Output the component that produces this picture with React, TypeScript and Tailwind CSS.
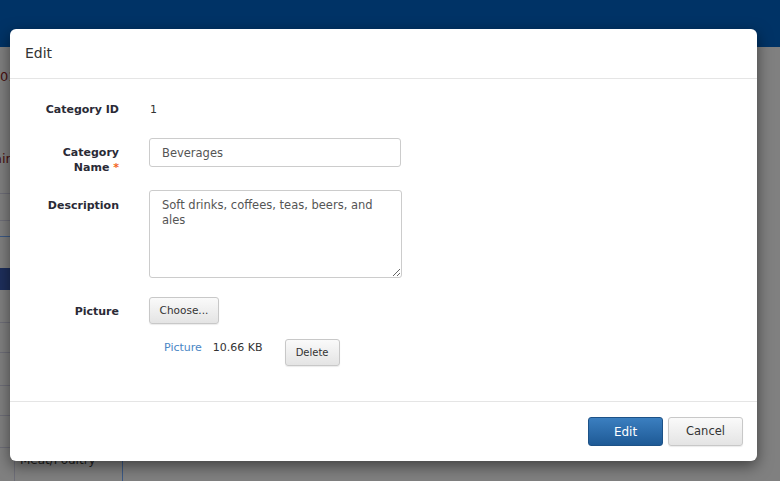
const font = { fontFamily: '"DejaVu Sans", Verdana, sans-serif' };

function BgTable() {
  const rows = [193, 220, 322, 352, 385, 415, 447];
  return (
    <div className="relative flex-1 bg-[#808080]">
      <div className="absolute left-0 top-[20px] text-[13px] text-[#4a1010]" style={font}>
        01
      </div>
      <div className="absolute left-[-6px] top-[102px] text-[13px] text-[#4a1010]" style={font}>
        ain
      </div>
      {rows.map((y) => (
        <div key={y} className="absolute left-0 w-[122px] h-px bg-[#6e6e78]" style={{ top: y - 47 }} />
      ))}
      <div className="absolute left-0 top-[189px] w-[122px] h-px bg-[#3c5a86]" />
      <div className="absolute left-0 top-[221px] w-[122px] h-[22px] bg-[#1e2f5c]" />
      <div className="absolute left-[14px] top-[274px] bottom-0 w-px bg-[#6e6e78]" />
      <div className="absolute left-[122px] top-[274px] bottom-0 w-px bg-[#3c5a86]" />
      <div className="absolute left-[20px] top-[404px] text-[12px] text-[#202020]" style={font}>
        Meat/Poultry
      </div>
    </div>
  );
}

function GrayButton({ children, className = "" }: { children: React.ReactNode; className?: string }) {
  return (
    <button
      className={
        "rounded-[3px] border border-[#c8c8c8] bg-gradient-to-b from-[#fafafa] to-[#e4e4e4] text-[#333] shadow-[0_1px_1px_rgba(0,0,0,0.08)] " +
        className
      }
      style={font}
    >
      {children}
    </button>
  );
}

export default function App() {
  return (
    <div className="relative w-[780px] h-[481px] overflow-hidden flex flex-col bg-[#808080]">
      <div className="h-[47px] bg-[#003366]" />
      <BgTable />

      <div
        className="absolute left-[10px] top-[29px] w-[747px] h-[432px] rounded-[6px] bg-white shadow-[0_5px_15px_rgba(0,0,0,0.5)] flex flex-col text-[#333]"
        style={font}
      >
        <div className="h-[50px] shrink-0 border-b border-[#e5e5e5] px-[15px] flex items-center">
          <span className="text-[14px] text-[#333]">Edit</span>
        </div>

        <div className="flex-1 flex flex-col pt-[21px]">
          <div className="flex items-center h-[20px]">
            <div className="w-[109px] text-right text-[11px] font-bold text-[#2a2a36]">Category ID</div>
            <div className="ml-[31px] text-[11px] text-[#333]">1</div>
          </div>

          <div className="flex h-[29px] mt-[18px]">
            <div className="w-[109px] pt-[7px] text-right text-[11px] leading-[15px] font-bold text-[#2a2a36]">
              Category
              <br />
              Name <span className="text-[#f26522]">*</span>
            </div>
            <input
              className="ml-[30px] w-[252px] h-[29px] rounded-[3px] border border-[#cccccc] px-[12px] text-[11.5px] text-[#555] outline-none"
              style={font}
              defaultValue="Beverages"
            />
          </div>

          <div className="flex h-[88px] mt-[23px]">
            <div className="w-[109px] pt-[8px] text-right text-[11px] leading-[15px] font-bold text-[#2a2a36]">
              Description
            </div>
            <textarea
              className="ml-[30px] w-[253px] h-[88px] rounded-[3px] border border-[#cccccc] px-[12px] pt-[7px] text-[11.5px] leading-[15px] text-[#555] outline-none"
              style={font}
              defaultValue="Soft drinks, coffees, teas, beers, and ales"
            />
          </div>

          <div className="flex items-center h-[27px] mt-[19px]">
            <div className="w-[109px] pt-[3px] text-right text-[11px] font-bold text-[#2a2a36]">Picture</div>
            <GrayButton className="ml-[30px] w-[70px] h-[27px] text-[10.5px]">Choose...</GrayButton>
          </div>

          <div className="flex items-start mt-[15px] ml-[154px]">
            <span className="mt-[1px] text-[11px] text-[#4a86c5]">Picture</span>
            <span className="ml-[11px] mt-[1px] text-[11px] text-[#333]">10.66 KB</span>
            <GrayButton className="ml-[22px] w-[55px] h-[27px] text-[10px]">Delete</GrayButton>
          </div>
        </div>

        <div className="h-[60px] shrink-0 border-t border-[#e5e5e5] flex justify-end items-start pt-[15px] pr-[14px] gap-[5px]">
          <button
            className="w-[75px] h-[29px] rounded-[3px] border border-[#1d5287] bg-gradient-to-b from-[#3b7fc0] to-[#1e5a96] text-white text-[12px]"
            style={font}
          >
            Edit
          </button>
          <GrayButton className="w-[75px] h-[29px] text-[11.5px]">Cancel</GrayButton>
        </div>
      </div>
    </div>
  );
}
